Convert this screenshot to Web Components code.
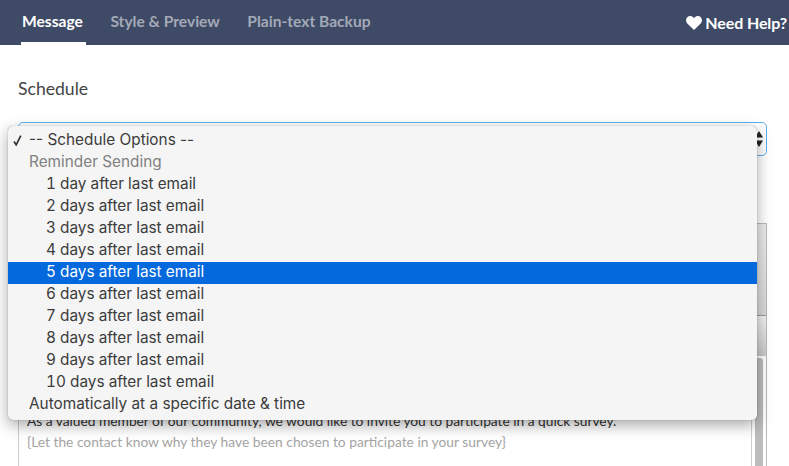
<!DOCTYPE html>
<html>
<head>
<meta charset="utf-8">
<title>Schedule</title>
<style>
    html, body { margin: 0; height: 100%; overflow: hidden; background: #fff; }
    body { font-family: "Lato", sans-serif; color: #444; }
</style>
</head>
<body>
<app-nav>
    <nav-tab active>Message</nav-tab>
    <nav-tab>Style &amp; Preview</nav-tab>
    <nav-tab>Plain-text Backup</nav-tab>
</app-nav>
<schedule-form label="Schedule">
    <option-menu slot="menu">
        <menu-item checked>-- Schedule Options --</menu-item>
        <menu-item group>Reminder Sending</menu-item>
        <menu-item nested>1 day after last email</menu-item>
        <menu-item nested>2 days after last email</menu-item>
        <menu-item nested>3 days after last email</menu-item>
        <menu-item nested>4 days after last email</menu-item>
        <menu-item nested selected>5 days after last email</menu-item>
        <menu-item nested>6 days after last email</menu-item>
        <menu-item nested>7 days after last email</menu-item>
        <menu-item nested>8 days after last email</menu-item>
        <menu-item nested>9 days after last email</menu-item>
        <menu-item nested>10 days after last email</menu-item>
        <menu-item>Automatically at a specific date &amp; time</menu-item>
    </option-menu>
    <message-editor>
        <div style="letter-spacing:-0.02px">As a valued member of our community, we would like to invite you to participate in a quick survey.</div>
        <div style="color:#a4a4a4;margin-top:2px">{Let the contact know why they have been chosen to participate in your survey}</div>
    </message-editor>
</schedule-form>
<script>
class AppNav extends HTMLElement {
    constructor() {
        super();
        this.attachShadow({ mode: 'open' });
        this.shadowRoot.innerHTML = `
            <style>
                :host { display: flex; height: 45px; background: #3f4b66; padding-left: 21px; justify-content: space-between; overflow: hidden; }
                .tabs { display: flex; gap: 23px; }
                .help { display: flex; align-items: center; gap: 3px; color: #fff; font: 700 16px "Lato", sans-serif; white-space: nowrap; margin-right: 2px; letter-spacing: -0.1px; }
                svg { width: 16px; height: 14px; display: block; }
            </style>
            <div class="tabs"><slot></slot></div>
            <div class="help">
                <svg viewBox="0 0 16 14"><path fill="#fff" d="M8 14 1.3 7.4C-.4 5.6-.4 2.9 1.2 1.2 2.9-.4 5.5-.4 7.1 1.2L8 2.1l.9-.9c1.6-1.6 4.2-1.6 5.9 0 1.6 1.7 1.6 4.4-.1 6.2z"/></svg>
                Need Help?
            </div>
        `;
    }
}

class NavTab extends HTMLElement {
    constructor() {
        super();
        this.attachShadow({ mode: 'open' });
        this.shadowRoot.innerHTML = `
            <style>
                :host { display: block; box-sizing: border-box; height: 45px; padding: 12px 3.5px 0 1px; color: #a3a9b7; font: 700 15.6px/19px "Lato", sans-serif; border-bottom: 3px solid transparent; }
                :host([active]) { color: #fff; border-bottom-color: #fff; }
            </style>
            <slot></slot>
        `;
    }
}

class ScheduleForm extends HTMLElement {
    constructor() {
        super();
        this.attachShadow({ mode: 'open' });
        this.shadowRoot.innerHTML = `
            <style>
                :host { display: block; position: relative; padding: 33px 22px 0 18px; }
                label { display: block; font: 400 17.6px/21px "Lato", sans-serif; color: #444; }
                .select { box-sizing: border-box; height: 34px; margin-top: 23px; border: 1px solid #5ab0ea; border-radius: 5px; display: flex; justify-content: flex-end; align-items: center; padding-right: 3px; }
                .menu { position: absolute; left: 8px; top: 81px; }
            </style>
            <label></label>
            <div class="select">
                <svg width="8" height="16" viewBox="0 0 8 16"><path fill="#222" d="M4 0 8 6.5H0zM4 16 0 9.5h8z"/></svg>
            </div>
            <slot></slot>
            <div class="menu"><slot name="menu"></slot></div>
        `;
        this.shadowRoot.querySelector('label').textContent = this.getAttribute('label');
    }
}

class OptionMenu extends HTMLElement {
    constructor() {
        super();
        this.attachShadow({ mode: 'open' });
        this.shadowRoot.innerHTML = `
            <style>
                :host { display: block; box-sizing: border-box; width: 749px; padding: 4px 0; background: #f5f5f5; border-radius: 5px; box-shadow: 0 0 1px rgba(0,0,0,.5), 0 5px 15px rgba(0,0,0,.35); }
            </style>
            <slot></slot>
        `;
    }
}

class MenuItem extends HTMLElement {
    constructor() {
        super();
        this.attachShadow({ mode: 'open' });
        this.shadowRoot.innerHTML = `
            <style>
                :host { display: block; position: relative; height: 22px; padding-left: 21px; color: #3c3c3c; font: 400 15.35px/19px "Inter", sans-serif; white-space: nowrap; }
                :host([nested]) { padding-left: 38px; font-variant-numeric: tabular-nums; }
                :host([group]) { color: #818181; }
                :host([selected]) { background: #0469dc; color: #fff; }
                svg { position: absolute; left: 5px; top: 5px; display: none; }
                :host([checked]) svg { display: block; }
            </style>
            <svg width="9" height="11" viewBox="0 0 9 11"><path fill="none" stroke="#333" stroke-width="1.7" d="M1 6.5 3.2 9.8 7.8.6"/></svg><slot></slot>
        `;
    }
}

class MessageEditor extends HTMLElement {
    constructor() {
        super();
        this.attachShadow({ mode: 'open' });
        this.shadowRoot.innerHTML = `
            <style>
                :host { display: block; box-sizing: border-box; height: 243px; margin-top: 67px; border: 1px solid #bbb; border-width: 1px 1px 0 0; overflow: hidden; }
                .toolbar { height: 91px; background: linear-gradient(#ececec, #d8d8d8); border-bottom: 1px solid #999; }
                .row { height: 40px; background: linear-gradient(#f2f2f2, #c8c8c8); }
                .body { display: flex; background: #fff; height: 110px; }
                .text { flex: 1; margin-top: 2px; border: 1px solid #ccc; border-bottom: 0; padding: 52px 8px 0; font: 400 13.8px/19px "Lato", sans-serif; color: #333; white-space: nowrap; overflow: hidden; }
                .bar { width: 8px; background: #bdbdbd; border-radius: 3px 3px 0 0; margin: 2px 3px 0; }
            </style>
            <div class="toolbar"></div>
            <div class="row"></div>
            <div class="body"><div class="text"><slot></slot></div><div class="bar"></div></div>
        `;
    }
}

customElements.define('app-nav', AppNav);
customElements.define('nav-tab', NavTab);
customElements.define('schedule-form', ScheduleForm);
customElements.define('option-menu', OptionMenu);
customElements.define('menu-item', MenuItem);
customElements.define('message-editor', MessageEditor);
</script>
</body>
</html>
